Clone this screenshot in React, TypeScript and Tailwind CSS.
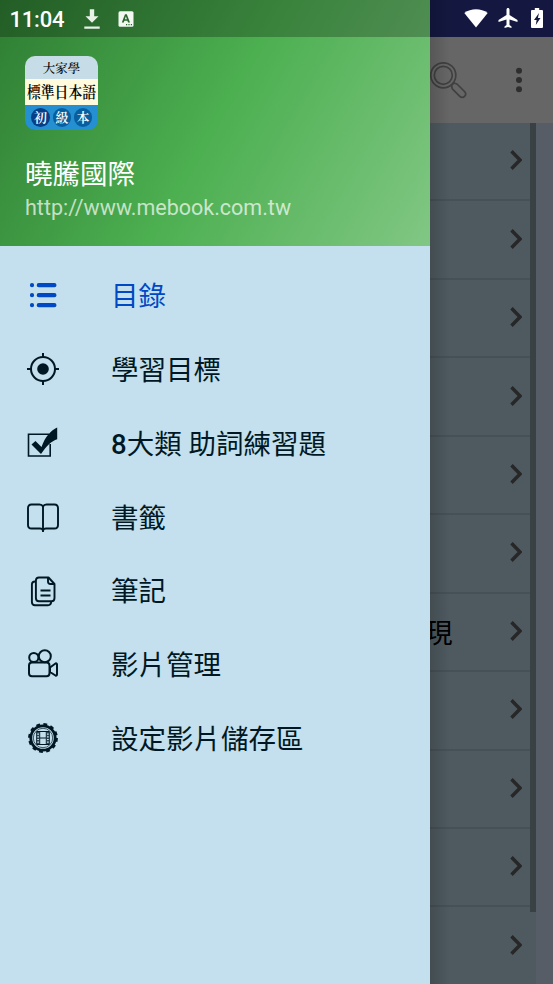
import type { ReactNode } from "react";
import { twMerge } from "tailwind-merge";

const LIST_ROWS = ["", "", "", "", "", "", "表現", "", "", "", ""];

const MENU_ITEMS: { label: ReactNode; icon: ReactNode; active?: boolean }[] = [
	{ label: "目錄", icon: <ListIcon />, active: true },
	{ label: "學習目標", icon: <TargetIcon /> },
	{
		label: (
			<>
				<span className="font-medium">8</span>大類 助詞練習題
			</>
		),
		icon: <CheckIcon />,
	},
	{ label: "書籤", icon: <BookIcon /> },
	{ label: "筆記", icon: <NotesIcon /> },
	{ label: "影片管理", icon: <CameraIcon /> },
	{ label: "設定影片儲存區", icon: <FilmGearIcon /> },
];

export default function App() {
	return (
		<div className="relative w-[553px] h-[984px] overflow-hidden font-[Roboto,'Noto_Sans_CJK_TC',sans-serif]">
			<MainScreen />
			<Drawer />
			<StatusBar />
		</div>
	);
}

function StatusBar() {
	return (
		<div className="absolute inset-x-0 top-0 h-[37px] flex items-center text-white">
			<div className="pl-[9.500px] pt-px w-[84px] shrink-0 text-[22px] leading-[37px] -tracking-[0.2px] font-medium">11:04</div>
			<svg className="w-4 h-[22px] shrink-0" viewBox="0 0 16 22">
				<path d="M5.8 1.2h4.4v7h4.3L8 14.8 1.5 8.2h4.3zM0.3 18.6h15.4v2.2H0.3z" fill="#e8f0e8" />
			</svg>
			<svg className="ml-[18px] w-4 h-4 shrink-0" viewBox="0 0 16 16">
				<rect x="0.5" y="0.3" width="15" height="15.4" rx="1.5" fill="#f2f7f2" />
				<path d="M3.8 11.4 7 3.3h1.8l3.2 8.1h-2l-.6-1.7H6.4l-.6 1.7zM6.9 8.2h2L7.9 5.2z" fill="#2a642d" fillRule="evenodd" />
				<path d="M8 13h1.2v1.2H8zM10.4 13h1.2v1.2h-1.2zM12.8 13H14v1.2h-1.2z" fill="#2a642d" />
			</svg>
			<div className="ml-auto flex items-center pr-[10px] pb-[1px]">
				<svg className="w-6 h-[19px]" viewBox="0 0 24 19">
					<path d="M0.3 4C7-1 17-1 23.7 4L12 18.4z" fill="#fff" />
				</svg>
				<svg className="ml-[10px] w-5 h-5" viewBox="2 2 20 20">
					<path d="M21.5 16v-2L13.5 9V3.500c0-.83-.67-1.500-1.500-1.500s-1.500.67-1.500 1.500V9l-8 5v2l8-2.500V19l-2 1.500V22l3.500-1 3.500 1v-1.500L13.500 19v-5.500z" fill="#fff" />
				</svg>
				<svg className="ml-[13px] w-3 h-5" viewBox="0 0 12 20">
					<path d="M3.800 0h4.400v2H11a1 1 0 0 1 1 1v16a1 1 0 0 1-1 1H1a1 1 0 0 1-1-1V3a1 1 0 0 1 1-1h2.800z" fill="#fff" />
					<path d="M8 5 3 12h2.600L4.800 17l4.700-7H6.900z" fill="#14183f" />
				</svg>
			</div>
		</div>
	);
}

function MainScreen() {
	return (
		<div className="flex flex-col w-full h-full bg-[#565d66]">
			<div className="h-[37px] shrink-0 bg-[#141840]" />
			<div className="h-[86px] shrink-0 flex items-center justify-end bg-[#666666]">
				<svg className="w-[38px] h-[38px]" viewBox="0 0 38 38" fill="none" stroke="#404040" strokeWidth="1.7">
					<circle cx="14.300" cy="14.300" r="12.500" />
					<circle cx="14.300" cy="14.300" r="9" />
					<path d="M22.500 24.500l2.500-2.500 3 1 7.500 7.500c3.200 3.200-1.500 8-4.700 4.800l-7.500-7.500z" strokeLinejoin="round" />
				</svg>
				<svg className="ml-[49px] mr-[31px] w-[6px] h-[26px]" viewBox="0 0 6 26" fill="#2e2e2e">
					<circle cx="3" cy="3.800" r="3" />
					<circle cx="3" cy="13" r="3" />
					<circle cx="3" cy="22.200" r="3" />
				</svg>
			</div>
			<div className="flex flex-1 min-h-0 overflow-hidden">
				<div className="w-[530px] h-full">
					{LIST_ROWS.map((row, i) => (
						<ListRow key={i} text={row} />
					))}
				</div>
				{/* scroll track */}
				<div className="w-[6px] h-full bg-[#4e5a60]">
					<div className="h-[789px] bg-[#394144]" />
				</div>
			</div>
		</div>
	);
}

function ListRow({ text }: { text: string }) {
	return (
		<div className="flex items-center justify-end h-[78.450px] bg-[#4e5a60] border-b-2 border-[#465157]">
			<span className="mt-[4px] text-[27.500px] leading-none text-black">{text}</span>
			<svg className="ml-[57.500px] mr-[8px] w-3 h-5 -mt-[2px]" viewBox="0 0 12 20" fill="none">
				<path d="M1.500 1.300 10 10l-8.500 8.700" stroke="#272727" strokeWidth="3.400" />
			</svg>
		</div>
	);
}

function Drawer() {
	return (
		<div className="absolute inset-y-0 left-0 flex">
			<div className="w-[430px] flex flex-col bg-[#c4dfed]">
				<DrawerHeader />
				<nav className="flex flex-col pt-[12.500px]">
					{MENU_ITEMS.map((item, i) => (
						<div
							key={i}
							className={twMerge(
								"flex items-center h-[73.800px] pl-[27px] text-[#001824]",
								item.active && "text-[#0048c4]",
							)}
						>
							{item.icon}
							<span className="ml-[52px] pt-[3px] text-[27.500px] leading-none whitespace-nowrap">{item.label}</span>
						</div>
					))}
				</nav>
			</div>
			<div className="w-5 bg-linear-to-r from-black/15 to-transparent" />
		</div>
	);
}

function DrawerHeader() {
	return (
		<div className="h-[246px] shrink-0 bg-[linear-gradient(119.800deg,#2e7d32,#4caf50_50%,#81c784)]">
			<div className="h-[37px] bg-black/25" />
			<div className="pl-[25px] pt-[19px]">
				<AppLogo />
				<div className="mt-[27px] text-[27.500px] leading-[36px] text-white">曉騰國際</div>
				<div className="mt-px text-[21.500px] leading-[27px] text-white/70">http://www.mebook.com.tw</div>
			</div>
		</div>
	);
}

function AppLogo() {
	return (
		<div className="w-[73px] h-[74px] rounded-[10px] overflow-hidden flex flex-col font-['Noto_Serif_CJK_TC','Noto_Sans_CJK_TC',serif] text-black text-center whitespace-nowrap">
			<div className="h-[23px] pt-[1px] bg-[#c6dce6] text-[12.500px] leading-[23px] font-medium">大家學</div>
			<div className="h-[26px] bg-[#fffbdc] text-[13.800px] leading-[25px] font-semibold flex justify-center">
				<span className="scale-y-[1.18]">標準日本語</span>
			</div>
			<div className="h-[25px] bg-[#2490d2] flex items-center justify-center gap-[3px] text-[13px] leading-[18px] font-semibold text-white">
				<span className="w-[19px] h-[19px] rounded-full bg-[#063f88]">初</span>
				<span className="w-[18px] h-[19px] rounded-full bg-[#085f9f]">級</span>
				<span className="w-[18px] h-[19px] rounded-full bg-[#085f9f]">本</span>
			</div>
		</div>
	);
}

function MenuIcon({ children }: { children: ReactNode }) {
	return (
		<svg
			className="w-8 h-8 shrink-0"
			viewBox="0 0 32 32"
			fill="none"
			stroke="currentColor"
			strokeWidth="2"
			strokeLinejoin="round"
		>
			{children}
		</svg>
	);
}

function ListIcon() {
	return (
		<MenuIcon>
			<g strokeLinecap="round" strokeWidth="4.200">
				<path d="M11.800 6.200h15.600M11.800 16.200h15.600M11.800 26.200h15.600" />
				<path d="M5 6.200h.01M5 16.200h.01M5 26.200h.01" />
			</g>
		</MenuIcon>
	);
}

function TargetIcon() {
	return (
		<MenuIcon>
			<circle cx="16" cy="16" r="12" />
			<circle cx="16" cy="16" r="5.800" fill="currentColor" stroke="none" />
			<path d="M16 0v5M16 27v5M0 16h5M27 16h5" />
		</MenuIcon>
	);
}

function CheckIcon() {
	return (
		<MenuIcon>
			<path d="M22 7.300H1.500V29H23.200V17" strokeWidth="1.600" strokeLinejoin="miter" />
			<path d="M30.200.500v11.700C24.500 14 19.500 19 14 27L4.500 17.500 8.500 14l4.500 4.500 1.500 1.500C18 10 24 3 30.200.500z" fill="currentColor" stroke="none" />
		</MenuIcon>
	);
}

function BookIcon() {
	return (
		<MenuIcon>
			<path d="M16 5.500Q15 3.500 12.500 3.500H4.500Q1 3.500 1 7V24Q1 27.500 4.500 27.500H13Q15.500 27.500 16 29.500Q16.500 27.500 19 27.500H27.500Q31 27.500 31 24V7Q31 3.500 27.500 3.500H19.500Q17 3.500 16 5.500V31" strokeWidth="1.900" />
		</MenuIcon>
	);
}

function NotesIcon() {
	return (
		<MenuIcon>
			<path d="M9 6.500H8Q4.900 6.500 4.900 9.500V27Q4.900 30.200 8 30.200H21Q24 30.200 24.200 26.500" strokeWidth="1.900" />
			<path d="M12 2.500H21.500L27.500 9V23Q27.500 26.300 24.500 26.300H12Q8.900 26.300 8.900 23V5.500Q8.900 2.500 12 2.500z" strokeWidth="1.900" />
			<path d="M21 3V6.500Q21 9 23.500 9H27M13.500 15.500h10M13.500 20.500h10" strokeWidth="1.900" />
		</MenuIcon>
	);
}

function CameraIcon() {
	return (
		<MenuIcon>
			<circle cx="6.800" cy="9.500" r="4.600" />
			<circle cx="17.800" cy="8.200" r="6" />
			<rect x="2" y="14.500" width="20.500" height="13.800" rx="3" />
			<path d="M23 19.500L28.500 15.500Q30 15 30 16.500V26.500Q30 28 28.500 27.500L23 24z" />
		</MenuIcon>
	);
}

function FilmGearIcon() {
	return (
		<MenuIcon>
			<circle cx="16" cy="16" r="12.200" strokeWidth="2.800" />
			<circle cx="16" cy="16" r="13.700" strokeWidth="2.400" strokeDasharray="3.800 3.373" />
			<circle cx="16" cy="16" r="9.700" strokeWidth="0.700" />
			<path d="M9.700 9.500h12.600v13H9.700z" strokeWidth="1" />
			<path d="M12.700 9.500v13M19.300 9.500v13M12.700 16h6.600" strokeWidth="1" />
			<path d="M11 10v12M21 10v12" strokeWidth="1.500" strokeDasharray="1.500 1.200" />
		</MenuIcon>
	);
}
